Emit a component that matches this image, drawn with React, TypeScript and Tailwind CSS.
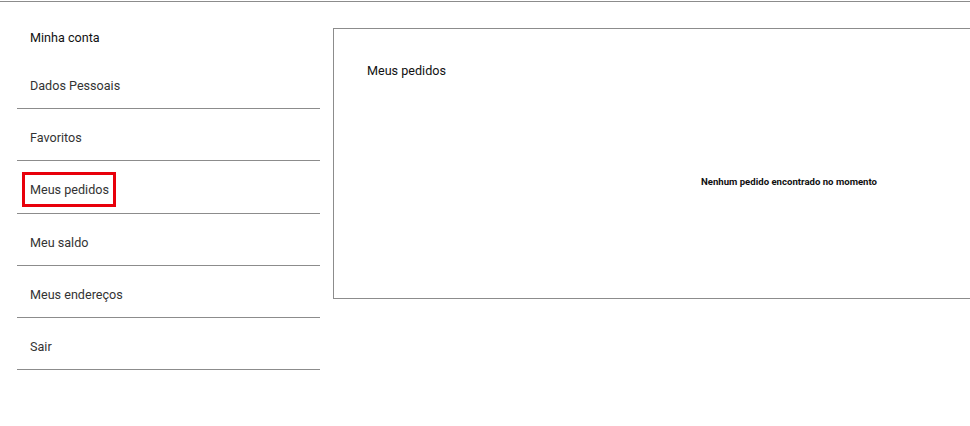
import React from "react";

const items = ["Dados Pessoais", "Favoritos", "Meus pedidos", "Meu saldo", "Meus endereços", "Sair"];

export default function App() {
  return (
    <div className="w-[970px] h-[426px] overflow-hidden bg-white" style={{ fontFamily: "Roboto, 'Noto Sans', sans-serif" }}>
      <div className="h-[2px] border-b border-[#8c8c8c]" />
      <div className="flex items-start">
        <aside className="ml-[17px] w-[303px] shrink-0 pt-[28px]">
          <div className="pl-[13px] text-[12.6px] leading-[15px] text-[#111] mb-[12px]">Minha conta</div>
          {items.map((it) => (
            <div key={it} className="h-[52.2px] border-b border-[#8c8c8c] pl-[13px] pt-[21px] text-[12.6px] leading-[15px] text-[#333]">
              {it === "Meus pedidos" ? (
                <span className="relative inline-block">
                  {it}
                  <span className="absolute -left-[8px] -top-[10px] w-[94px] h-[35px] border-[3px] border-[#e8000b]" />
                </span>
              ) : (
                <span>{it}</span>
              )}
            </div>
          ))}
        </aside>
        <section className="ml-[13px] mt-[26px] w-[912px] h-[271px] shrink-0 border border-[#8c8c8c] flex flex-col">
          <div className="pl-[33px] pt-[34px] text-[12.6px] leading-[15px] text-[#111]">Meus pedidos</div>
          <div className="mt-[98px] text-center text-[9.6px] leading-[12px] font-bold text-[#111]">
            Nenhum pedido encontrado no momento
          </div>
        </section>
      </div>
    </div>
  );
}
